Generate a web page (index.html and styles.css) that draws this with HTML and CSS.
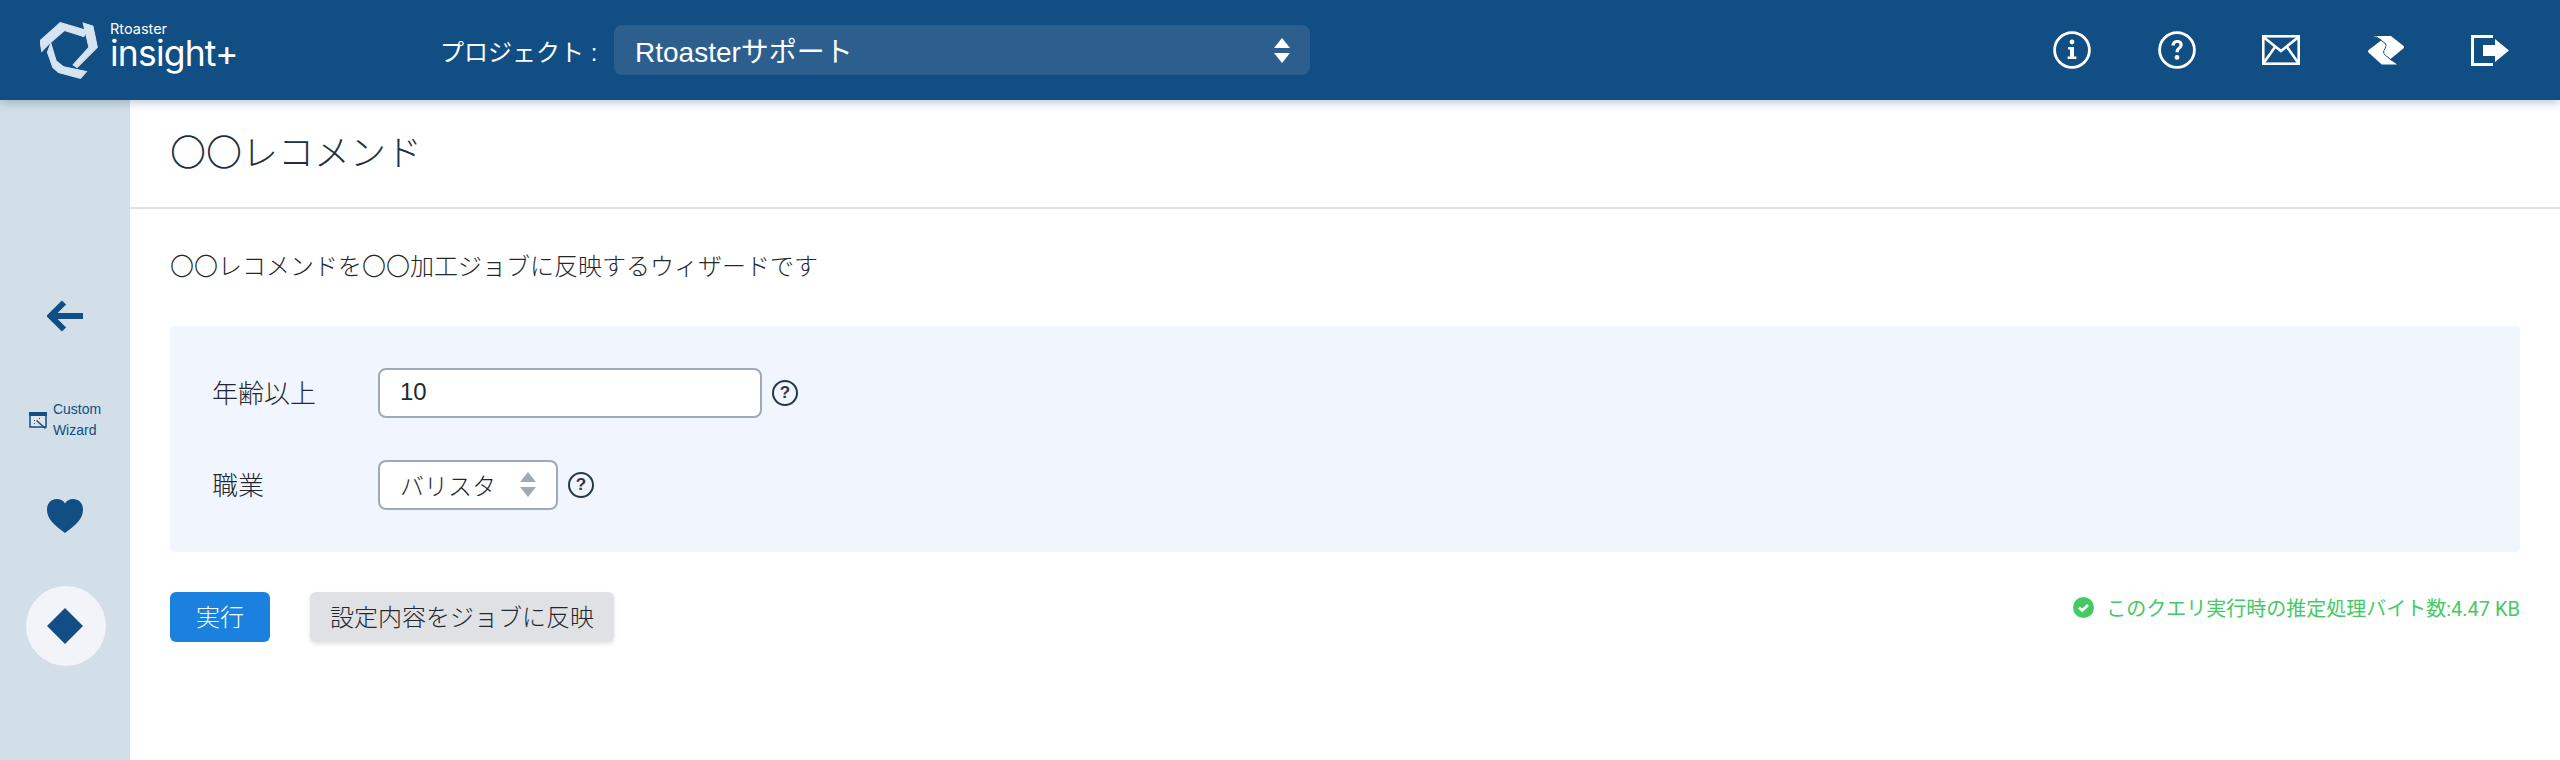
FILE: index.html
```html
<!DOCTYPE html>
<html lang="ja">
<head>
    <meta charset="UTF-8">
    <title>〇〇レコメンド</title>
    <link rel="stylesheet" href="styles.css">
</head>
<body>
    <header class="topbar">
        <div class="logo">
            <svg class="logo-mark" viewBox="30 22 172 172">
                <path d="M30 80 L90 27 L168 50 L160 68 L103 50 L62 85 L35 112 Z"/>
                <path d="M158 28 L187 37 L200 100 L140 160 L128 152 L175 100 Z"/>
                <path d="M62 88 L78 140 L100 158 L168 172 L150 192 L85 175 L68 160 L52 115 Z"/>
            </svg>
            <div class="logo-text">
                <span class="logo-small">Rtoaster</span>
                <span class="logo-big">insight+</span>
            </div>
        </div>
        <div class="project">
            <label class="project-label">プロジェクト :</label>
            <div class="project-select">
                <span>Rtoasterサポート</span>
                <span class="project-arrows">
                    <i class="up"></i>
                    <i class="down"></i>
                </span>
            </div>
        </div>
        <nav class="top-icons">
            <svg class="top-icon" viewBox="0 0 38 38">
                <circle cx="19" cy="19" r="17.4" fill="none" stroke="#fff" stroke-width="2.8"/>
                <circle cx="19" cy="11" r="2.400" fill="#fff"/>
                <path d="M15 16h6v9.500h2.400v2.600h-8.800v-2.600H17v-7h-2z" fill="#fff"/>
            </svg>
            <svg class="top-icon" viewBox="0 0 38 38">
                <circle cx="19" cy="19" r="17.4" fill="none" stroke="#fff" stroke-width="2.8"/>
                <path d="M13.500 14.500c0-3.300 2.400-5.500 5.700-5.500s5.500 2 5.500 4.800c0 4-4 4-4 7.400h-3.200c0-4.800 4-4.700 4-7.400 0-1.100-.9-2-2.300-2s-2.300 1-2.300 2.700z" fill="#fff"/>
                <circle cx="19" cy="26.400" r="2.400" fill="#fff"/>
            </svg>
            <svg class="top-icon" viewBox="0 0 38 30">
                <rect x="1.300" y="1.300" width="35.400" height="27.400" fill="none" stroke="#fff" stroke-width="2.600"/>
                <path d="M2 2.500 L19 16 L36 2.500 M2 27.500 L13 12 M36 27.500 L25 12" fill="none" stroke="#fff" stroke-width="2.600"/>
            </svg>
            <svg class="top-icon" viewBox="30 30 116 92">
                <path d="M50 33 H103 L140 62 Q146 67 140 72 L100 105 L122 120 H75 L36 85 Q30 80 36 75 L75 45 Z" fill="#fff"/>
                <path d="M55 33 L85 55 Q92 62 85 72 Q76 82 86 92 L106 108" fill="none" stroke="#104e84" stroke-width="3"/>
            </svg>
            <svg class="top-icon" viewBox="0 0 38 31">
                <path d="M22 1.500H1.500v28H22" fill="none" stroke="#fff" stroke-width="3"/>
                <path d="M12 10h12V4l14 11.500L24 27v-6H12z" fill="#fff"/>
            </svg>
        </nav>
    </header>

    <div class="page">
        <aside class="sidebar">
            <a class="side-item side-back">
                <svg width="36" height="32" viewBox="0 0 36 32">
                    <path d="M17 2.500 L3.500 16 L17 29.500 M4 16 H36" fill="none" stroke="#104e84" stroke-width="6"/>
                </svg>
            </a>
            <a class="side-item side-wizard">
                <svg width="18" height="17" viewBox="0 0 18 17">
                    <rect x="1" y="1" width="16" height="14" fill="#dfe4ea" stroke="#104e84" stroke-width="1.500"/>
                    <rect x="0" y="0" width="18" height="4" fill="#104e84"/>
                    <path d="M8 8l9 8-1 1-9-8z" fill="#104e84"/>
                    <path d="M5 8h1v1H5zM10 6h1v1h-1zM5 11h1v1H5z" fill="#104e84"/>
                </svg>
                <span>Custom<br>Wizard</span>
            </a>
            <a class="side-item side-heart">
                <svg width="36" height="34" viewBox="0 0 36 34">
                    <path d="M18 34C7 26 0 20 0 10.500 0 4 4.500 0 10 0c3.500 0 6.500 1.500 8 4.500C19.500 1.500 22.500 0 26 0c5.500 0 10 4 10 10.500C36 20 29 26 18 34z" fill="#104e84"/>
                </svg>
            </a>
            <a class="side-item side-current">
                <svg width="36" height="36" viewBox="0 0 36 36">
                    <path d="M18 0 L36 18 L18 36 L0 18 Z" fill="#104e84"/>
                </svg>
            </a>
        </aside>

        <main class="content">
            <h1 class="title">〇〇レコメンド</h1>
            <div class="body">
                <p class="description">〇〇レコメンドを〇〇加工ジョブに反映するウィザードです</p>

                <div class="panel">
                    <div class="form-row">
                        <label>年齢以上</label>
                        <div class="field field-text">10</div>
                        <span class="help">?</span>
                    </div>
                    <div class="form-row">
                        <label>職業</label>
                        <div class="field field-select">
                            バリスタ
                            <span class="select-arrows">
                                <i class="up"></i>
                                <i class="down"></i>
                            </span>
                        </div>
                        <span class="help">?</span>
                    </div>
                </div>

                <div class="actions">
                    <div class="buttons">
                        <button class="btn btn-run">実行</button>
                        <button class="btn btn-apply">設定内容をジョブに反映</button>
                    </div>
                    <div class="estimate">
                        <svg width="21" height="21" viewBox="0 0 21 21">
                            <circle cx="10.500" cy="10.500" r="10.500" fill="#46c964"/>
                            <path d="M6 10.500l3.200 3L15 8" fill="none" stroke="#fff" stroke-width="2.600"/>
                        </svg>
                        <span>このクエリ実行時の推定処理バイト数:4.47 KB</span>
                    </div>
                </div>
            </div>
        </main>
    </div>
</body>
</html>
```

FILE: styles.css
```css
/* ページ全体 */
body {
    margin: 0;
    height: 760px;
    overflow: hidden;
    background-color: #fff;
    color: #23282e;
    font-family: "Liberation Sans", "Noto Sans CJK JP", sans-serif;
    font-size: 24px;
    font-weight: 300;
}

/* ヘッダー */
.topbar {
    position: relative;
    z-index: 2;
    display: flex;
    align-items: center;
    height: 100px;
    background-color: #104e84;
    box-shadow: 0 2px 10px rgba(16, 50, 90, 0.3);
    color: #fff;
}

.logo {
    display: flex;
    align-items: center;
    gap: 12px;
    width: 442px;
    padding-left: 40px;
    box-sizing: border-box;
}

.logo-mark {
    width: 58px;
    height: 58px;
    fill: #d6e4f1;
    stroke: #d6e4f1;
    stroke-width: 3;
}

.logo-text {
    display: flex;
    flex-direction: column;
    margin-top: -6px;
    font-family: Inter, sans-serif;
    font-weight: 400;
}

.logo-small {
    font-size: 14.500px;
    line-height: 14px;
}

.logo-big {
    font-size: 35.500px;
    line-height: 36px;
    letter-spacing: -0.8px;
}

.project {
    display: flex;
    align-items: center;
    font-weight: 400;
}

.project-label {
    width: 172px;
    margin-left: -2px;
    padding-right: 2px;
    font-size: 24px;
}

.project-select {
    display: flex;
    align-items: center;
    justify-content: space-between;
    width: 696px;
    height: 50px;
    padding: 0 20px 0 21px;
    box-sizing: border-box;
    background-color: #2c5f8e;
    border-radius: 8px;
    font-size: 28px;
}

.project-arrows,
.select-arrows {
    display: flex;
    flex-direction: column;
    gap: 5px;
}

.project-arrows i,
.select-arrows i {
    display: block;
    width: 0;
    height: 0;
    border-left: 8px solid transparent;
    border-right: 8px solid transparent;
}

.project-arrows .up { border-bottom: 10px solid #fff; }
.project-arrows .down { border-top: 10px solid #fff; }
.select-arrows .up { border-bottom: 10px solid #9eaab6; }
.select-arrows .down { border-top: 10px solid #9eaab6; }

.top-icons {
    display: flex;
    align-items: center;
    gap: 66.500px;
    margin-left: auto;
    padding-right: 51px;
}

.top-icon {
    display: block;
    width: 38px;
}

/* サイドバーと本体 */
.page {
    display: flex;
    height: 660px;
}

.sidebar {
    display: flex;
    flex-direction: column;
    align-items: center;
    flex: none;
    width: 130px;
    padding-top: 176px;
    box-sizing: border-box;
    background-color: #d2dfe9;
}

.side-item {
    display: flex;
    align-items: center;
    justify-content: center;
    height: 80px;
}

.side-back { width: 80px; }

.side-wizard {
    gap: 6px;
    margin-top: 24px;
    color: #104e84;
    font-size: 14px;
    font-weight: 400;
    line-height: 21px;
}

.side-heart { margin-top: 16px; }

/* 丸だけ少し右にずれている */
.side-current {
    width: 78px;
    margin-top: 30px;
    margin-left: 2px;
    padding-right: 2px;
    background-color: #f2f4f9;
    border-radius: 50%;
}

.content {
    flex: 1;
}

.title {
    margin: 0;
    height: 107px;
    padding: 0 40px;
    border-bottom: 2px solid #e0e0e8;
    color: #1c2f43;
    font-size: 36px;
    font-weight: 300;
    line-height: 108px;
}

.body {
    padding: 0 40px;
}

.description {
    margin: 0;
    padding-top: 40px;
    height: 77px;
    line-height: 36px;
}

/* 入力パネル */
.panel {
    display: flex;
    flex-direction: column;
    gap: 42px;
    padding: 42px;
    background-color: #f1f5fd;
    border-radius: 4px;
}

.form-row {
    display: flex;
    align-items: center;
}

.form-row label {
    width: 166px;
    padding-bottom: 3px;
    font-size: 26px;
}

.field {
    display: flex;
    align-items: center;
    justify-content: space-between;
    height: 50px;
    padding: 0 20px 2px;
    box-sizing: border-box;
    background-color: #fff;
    border: 2.500px solid #9eaab6;
    border-radius: 8px;
}

.field-text { width: 384px; }
.field-select { width: 180px; }

.help {
    display: flex;
    align-items: center;
    justify-content: center;
    width: 26px;
    height: 26px;
    margin-left: 10px;
    box-sizing: border-box;
    border: 2px solid #23384f;
    border-radius: 50%;
    color: #23384f;
    font-size: 17px;
    font-weight: bold;
}

/* ボタン行 */
.actions {
    display: flex;
    justify-content: space-between;
    align-items: center;
    margin-top: 40px;
}

.buttons {
    display: flex;
    gap: 40px;
}

.btn {
    height: 50px;
    padding-bottom: 5px;
    border: none;
    border-radius: 6px;
    font-family: inherit;
    font-size: 24px;
    font-weight: 300;
}

.btn-run {
    width: 100px;
    background-color: #1a82de;
    color: #fff;
}

.btn-apply {
    width: 304px;
    background-color: #e0e1e5;
    color: #23282e;
    box-shadow: 0 2px 4px rgba(0, 0, 0, 0.12);
}

.estimate {
    display: flex;
    align-items: center;
    gap: 12px;
    margin-top: -20px;
    color: #46c964;
    font-family: Roboto, "Noto Sans CJK JP", sans-serif;
    font-size: 20px;
    font-weight: 400;
}
```
